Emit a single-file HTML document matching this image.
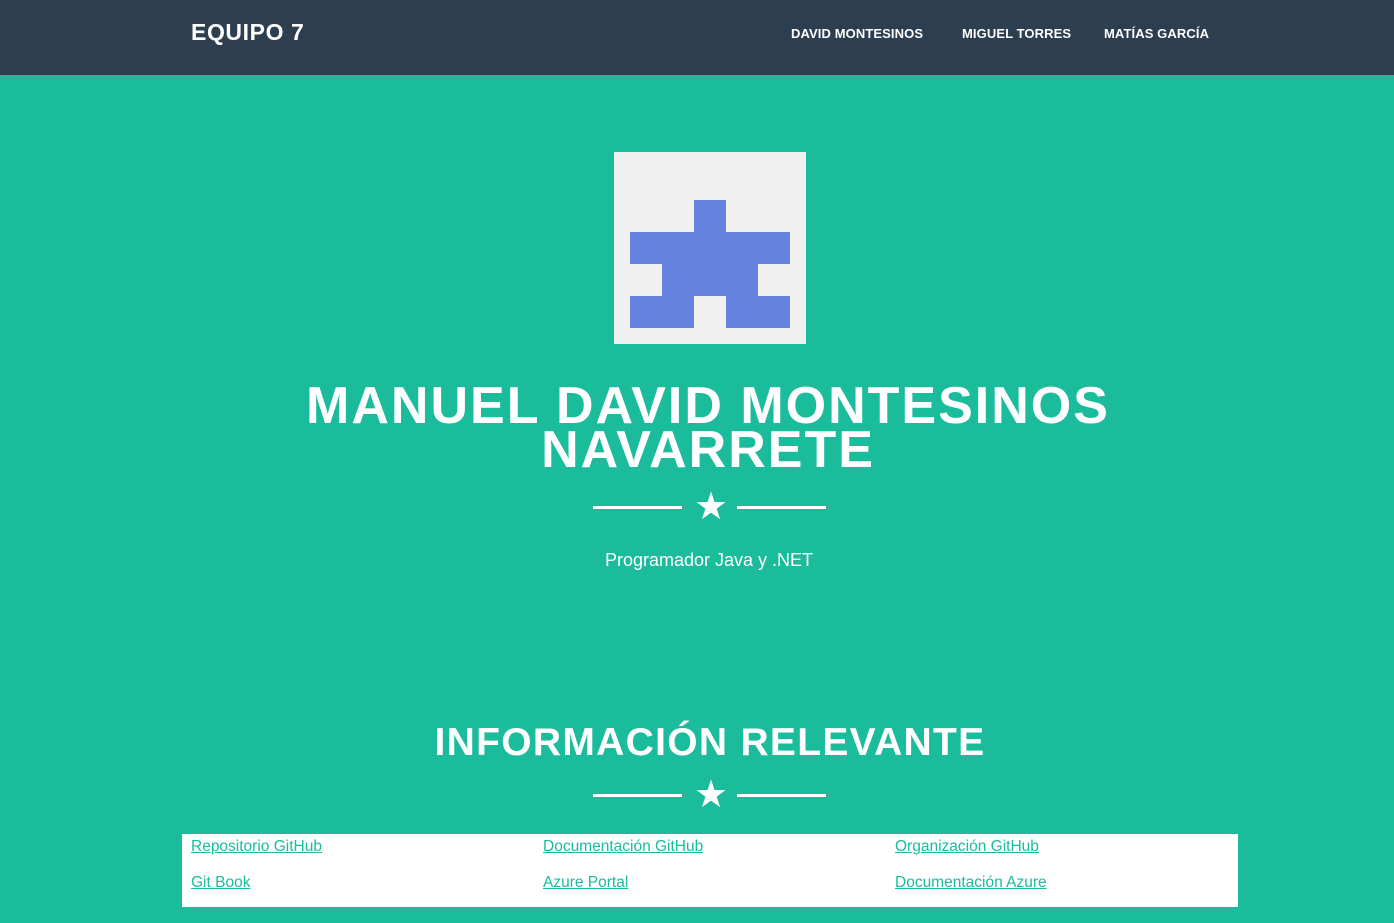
<!DOCTYPE html>
<html><head><meta charset="utf-8"><style>
*{margin:0;padding:0;box-sizing:border-box}
body{width:1394px;height:923px;background:#1abc9c;font-family:"Liberation Sans",sans-serif;overflow:hidden;position:relative}
nav{position:absolute;left:0;top:0;width:1394px;height:75px;background:#2c3e50}
.brand{position:absolute;left:191px;top:19px;color:#fff;font-weight:bold;font-size:23px;letter-spacing:0.6px}
.nl{position:absolute;top:26px;color:#fff;font-weight:bold;font-size:13px;letter-spacing:0.1px}
.av{position:absolute;left:614px;top:152px;width:192px;height:192px;background:#f0f0f0}
.b{position:absolute;background:#6482de}
h1{position:absolute;left:0;width:1394px;text-align:center;color:#fff;font-size:52px;font-weight:bold;line-height:44px;top:384px;letter-spacing:2px;padding-left:22px}
.line{position:absolute;height:3px;width:89px;background:#fff}
.star{position:absolute;color:#fff;font-size:38px;line-height:38px}
.sub{position:absolute;left:0;width:1394px;text-align:center;color:#fff;font-size:18px;top:550px;padding-left:24px}
h2{position:absolute;left:0;width:1394px;text-align:center;color:#fff;font-size:39px;font-weight:bold;top:721px;letter-spacing:1.3px;padding-left:26px}
.tbl{position:absolute;left:182px;top:834px;width:1056px;height:73px;background:#fff}
.tbl a{position:absolute;color:#1abc9c;font-size:15.5px;text-decoration:underline}
</style></head><body>
<nav><div class="brand">EQUIPO 7</div>
<div class="nl" style="left:791px">DAVID MONTESINOS</div>
<div class="nl" style="left:962px">MIGUEL TORRES</div>
<div class="nl" style="left:1104px">MATÍAS GARCÍA</div></nav>
<div class="av">
<div class="b" style="left:80px;top:48px;width:32px;height:32px"></div>
<div class="b" style="left:16px;top:80px;width:160px;height:32px"></div>
<div class="b" style="left:48px;top:112px;width:96px;height:32px"></div>
<div class="b" style="left:16px;top:144px;width:64px;height:32px"></div>
<div class="b" style="left:112px;top:144px;width:64px;height:32px"></div>
</div>
<h1>MANUEL DAVID MONTESINOS<br>NAVARRETE</h1>
<div class="line" style="left:593px;top:506px"></div>
<div class="star" style="left:694px;top:488px">★</div>
<div class="line" style="left:737px;top:506px"></div>
<div class="sub">Programador Java y .NET</div>
<h2>INFORMACIÓN RELEVANTE</h2>
<div class="line" style="left:593px;top:794px"></div>
<div class="star" style="left:694px;top:776px">★</div>
<div class="line" style="left:737px;top:794px"></div>
<div class="tbl">
<a style="left:9px;top:4px">Repositorio GitHub</a>
<a style="left:361px;top:4px">Documentación GitHub</a>
<a style="left:713px;top:4px">Organización GitHub</a>
<a style="left:9px;top:40px">Git Book</a>
<a style="left:361px;top:40px">Azure Portal</a>
<a style="left:713px;top:40px">Documentación Azure</a>
</div>
</body></html>
